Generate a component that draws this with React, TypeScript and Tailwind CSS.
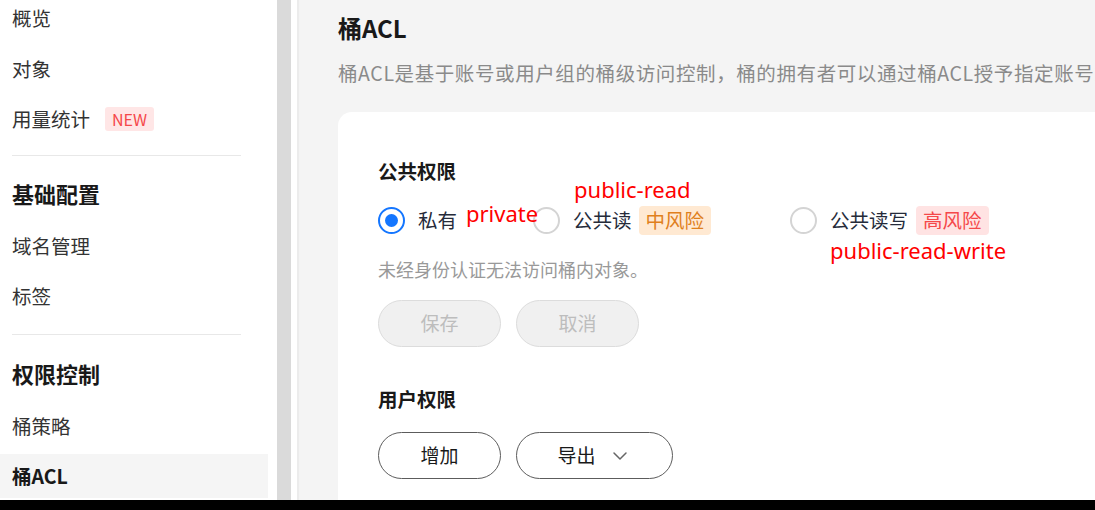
import React from 'react';
import { ChevronDown } from 'lucide-react';

const font = "font-['Noto_Sans_CJK_SC','Noto_Sans',sans-serif]";
const note = "absolute z-10 text-[22px] leading-[24px] text-[#ff0000] font-['Noto_Sans',sans-serif] whitespace-nowrap";

const Radio = ({ checked }: { checked?: boolean }) =>
  checked ? (
    <span className="w-[27px] h-[27px] rounded-full border-2 border-[#1476ff] flex items-center justify-center shrink-0">
      <span className="w-[13px] h-[13px] rounded-full bg-[#1476ff]" />
    </span>
  ) : (
    <span className="w-[27px] h-[27px] rounded-full border-2 border-[#d4d4d4] bg-white shrink-0" />
  );

const Sidebar = () => {
  const item = 'h-[44px] flex items-center px-3 text-[19.5px] text-[#333]';
  const head = 'h-[44px] flex items-center px-3 text-[22px] font-bold text-[#191919]';
  return (
    <div className="w-[277px] bg-white shrink-0">
      <div className="w-[268px] -mt-[4px]">
        <div className={item}>概览</div>
        <div className={`${item} mt-[7px]`}>对象</div>
        <div className={`${item} mt-[6px]`}>
          用量统计
          <span className="ml-[15px] h-[24px] px-[7px] rounded-[3px] bg-[#ffe6e6] text-[#f5484a] text-[16px] flex items-center">NEW</span>
        </div>
        <div className="mx-3 mt-[14px] h-px w-[229px] bg-[#e8e8e8]" />
        <div className={`${head} mt-[15px]`}>基础配置</div>
        <div className={`${item} mt-[9px]`}>域名管理</div>
        <div className={`${item} mt-[6px]`}>标签</div>
        <div className="mx-3 mt-[16px] h-px w-[229px] bg-[#e8e8e8]" />
        <div className={`${head} mt-[16px]`}>权限控制</div>
        <div className={`${item} mt-[9px]`}>桶策略</div>
        <div className={`${item} mt-[6px] bg-[#f5f5f5] font-semibold text-[#191919]`}>桶ACL</div>
      </div>
    </div>
  );
};

export default function App() {
  return (
    <div className={`w-[1095px] h-[510px] overflow-hidden flex flex-col ${font}`}>
      <div className="flex h-[500px] overflow-hidden">
        <Sidebar />
        <div className="w-[14px] bg-[#dadada] shrink-0" />
        <div className="w-[6px] bg-white shrink-0" />
        <div className="w-[2px] bg-[#ececec] shrink-0" />
        <div className="flex-1 bg-[#f4f4f4] pl-[39px] overflow-hidden">
          <h1 className="mt-[12px] h-[32px] text-[24px] font-bold text-[#191919] leading-[32px]">桶ACL</h1>
          <p className="mt-[16px] text-[19.5px] tracking-[0.6px] text-[#8a8a8a] whitespace-nowrap leading-[26px]">
            桶ACL是基于账号或用户组的桶级访问控制，桶的拥有者可以通过桶ACL授予指定账号或用户组对桶的访问权限。
          </p>
          <div className="mt-[26px] bg-white rounded-l-[14px] h-[420px] pl-[40px] pt-[48px]">
            <h2 className="text-[19.5px] font-bold text-[#191919] leading-[26px] -mt-[2px]">公共权限</h2>
            <div className="flex items-center mt-[21px] h-[30px] text-[19.5px] text-[#252b3a]">
              <div className="relative w-[155px] flex items-center shrink-0">
                <Radio checked />
                <span className="ml-[13px]">私有</span>
                <span className={`${note} left-[88px] top-[-4px] text-[21px]`}>private</span>
              </div>
              <div className="relative w-[257px] flex items-center shrink-0">
                <Radio />
                <span className="ml-[13px]">公共读</span>
                <span className="ml-[7px] h-[29px] px-[7px] rounded-[4px] bg-[#ffe9d2] text-[#e0801d] flex items-center">中风险</span>
                <span className={`${note} left-[41px] top-[-28px]`}>public-read</span>
              </div>
              <div className="relative flex items-center shrink-0">
                <Radio />
                <span className="ml-[13px]">公共读写</span>
                <span className="ml-[8px] h-[29px] px-[7px] rounded-[4px] bg-[#ffe3e3] text-[#f5484a] flex items-center">高风险</span>
                <span className={`${note} left-[40px] top-[33px]`}>public-read-write</span>
              </div>
            </div>
            <p className="mt-[22px] text-[18px] text-[#999] leading-[24px]">未经身份认证无法访问桶内对象。</p>
            <div className="flex gap-[15px] mt-[19px]">
              <button className="w-[123px] h-[47px] rounded-full bg-[#f0f0f0] border border-[#dcdcdc] text-[19px] text-[#bdbdbd]">保存</button>
              <button className="w-[123px] h-[47px] rounded-full bg-[#f0f0f0] border border-[#dcdcdc] text-[19px] text-[#bdbdbd]">取消</button>
            </div>
            <h2 className="mt-[39px] text-[19.5px] font-bold text-[#191919] leading-[26px]">用户权限</h2>
            <div className="flex gap-[15px] mt-[20px]">
              <button className="w-[123px] h-[47px] rounded-full bg-white border border-[#5c5c5c] text-[19px] text-[#191919]">增加</button>
              <button className="w-[157px] h-[47px] rounded-full bg-white border border-[#5c5c5c] text-[19px] text-[#191919] flex items-center justify-center gap-[12px]">
                导出
                <ChevronDown className="w-[24px] h-[24px] text-[#666]" strokeWidth={1.5} />
              </button>
            </div>
          </div>
        </div>
      </div>
      <div className="h-[10px] bg-black shrink-0" />
    </div>
  );
}
